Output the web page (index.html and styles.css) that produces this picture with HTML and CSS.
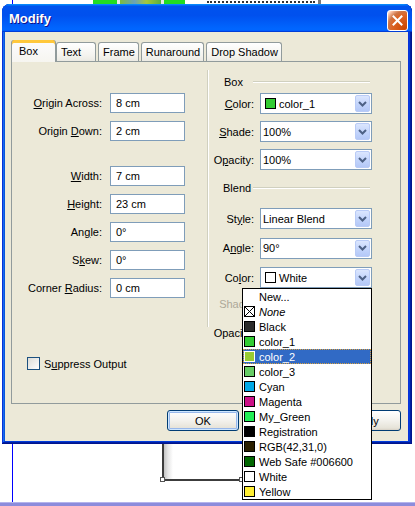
FILE: index.html
```html
<!DOCTYPE html>
<html>
<head>
<meta charset="utf-8">
<title>Modify</title>
<link rel="stylesheet" href="styles.css">
</head>
<body>
<div class="desk">
  <div class="desk-guide"></div>
  <div class="desk-pic"><span class="pic-a"></span><span class="pic-b"></span><span class="pic-c"></span><span class="pic-b"></span><span class="pic-a pic-short"></span></div>
  <div class="desk-dots"></div>
  <div class="desk-rule"></div>
  <div class="desk-box"><span class="handle handle-l"></span><span class="handle handle-r"></span></div>
  <div class="desk-strip"></div>
</div>

<div class="window">
  <div class="titlebar">
    <span class="title">Modify</span>
    <span class="close"><svg width="13" height="13" viewBox="0 0 13 13"><path d="M2.5 2.5 L10.5 10.5 M10.5 2.5 L2.5 10.5" stroke="#fff" stroke-width="2" stroke-linecap="square"/></svg></span>
  </div>
  <div class="client">
    <div class="tabs">
      <div class="tab active">Box</div>
      <div class="tab tab-first">Text</div>
      <div class="tab">Frame</div>
      <div class="tab tab-wide">Runaround</div>
      <div class="tab tab-wide">Drop Shadow</div>
    </div>
    <div class="panel">
      <div class="left">
        <div class="fields">
          <span class="lbl"><u>O</u>rigin Across:</span><span class="field">8 cm</span>
          <span class="lbl">Origin <u>D</u>own:</span><span class="field">2 cm</span>
        </div>
        <div class="fields fields-size">
          <span class="lbl"><u>W</u>idth:</span><span class="field">7 cm</span>
          <span class="lbl"><u>H</u>eight:</span><span class="field">23 cm</span>
          <span class="lbl">An<u>g</u>le:</span><span class="field">0°</span>
          <span class="lbl">S<u>k</u>ew:</span><span class="field">0°</span>
          <span class="lbl">Corner <u>R</u>adius:</span><span class="field">0 cm</span>
        </div>
        <div class="check"><span class="checkbox"></span><span>S<u>u</u>ppress Output</span></div>
      </div>
      <div class="right">
        <div class="group-head"><span class="head-text">Box</span><span class="rule"></span></div>
        <div class="rows">
          <span class="lbl"><u>C</u>olor:</span>
          <span class="combo"><span class="val"><span class="sw sw-c1"></span>color_1</span><span class="drop"><svg width="9" height="6" viewBox="0 0 9 6"><path d="M1 1 L4.5 4.5 L8 1" fill="none" stroke="#4d6185" stroke-width="2"/></svg></span></span>
          <span class="lbl"><u>S</u>hade:</span>
          <span class="combo"><span class="val">100%</span><span class="drop"><svg width="9" height="6" viewBox="0 0 9 6"><path d="M1 1 L4.5 4.5 L8 1" fill="none" stroke="#4d6185" stroke-width="2"/></svg></span></span>
          <span class="lbl">O<u>p</u>acity:</span>
          <span class="combo"><span class="val">100%</span><span class="drop"><svg width="9" height="6" viewBox="0 0 9 6"><path d="M1 1 L4.5 4.5 L8 1" fill="none" stroke="#4d6185" stroke-width="2"/></svg></span></span>
        </div>
        <div class="group-head group-blend"><span class="head-text head-blend">Blend</span><span class="rule"></span></div>
        <div class="rows rows-blend">
          <span class="lbl">St<u>y</u>le:</span>
          <span class="combo"><span class="val">Linear Blend</span><span class="drop"><svg width="9" height="6" viewBox="0 0 9 6"><path d="M1 1 L4.5 4.5 L8 1" fill="none" stroke="#4d6185" stroke-width="2"/></svg></span></span>
          <span class="lbl">A<u>n</u>gle:</span>
          <span class="combo"><span class="val">90°</span><span class="drop"><svg width="9" height="6" viewBox="0 0 9 6"><path d="M1 1 L4.5 4.5 L8 1" fill="none" stroke="#4d6185" stroke-width="2"/></svg></span></span>
          <span class="lbl">Co<u>l</u>or:</span>
          <span class="combo"><span class="val"><span class="sw sw-white"></span>White</span><span class="drop"><svg width="9" height="6" viewBox="0 0 9 6"><path d="M1 1 L4.5 4.5 L8 1" fill="none" stroke="#4d6185" stroke-width="2"/></svg></span></span>
        </div>
        <div class="rows rows-under">
          <span class="lbl lbl-disabled">Shade:</span>
          <span class="combo"></span>
          <span class="lbl">Opacity:</span>
          <span class="combo"></span>
        </div>
      </div>
    </div>
    <div class="buttons">
      <button class="btn btn-default">OK</button>
      <button class="btn">Cancel</button>
      <button class="btn">Apply</button>
    </div>
  </div>
</div>

<ul class="popup">
  <li class="item-new">New...</li>
  <li><svg class="sw-svg" width="11" height="11" viewBox="0 0 11 11"><rect x="0.5" y="0.5" width="10" height="10" fill="#fff" stroke="#000"/><path d="M1 1 L10 10 M10 1 L1 10" stroke="#000" stroke-width="1"/></svg><i>None</i></li>
  <li><span class="sw sw-black"></span>Black</li>
  <li><span class="sw sw-c1"></span>color_1</li>
  <li class="item-sel"><span class="sw sw-c2"></span>color_2</li>
  <li><span class="sw sw-c3"></span>color_3</li>
  <li><span class="sw sw-cyan"></span>Cyan</li>
  <li><span class="sw sw-magenta"></span>Magenta</li>
  <li><span class="sw sw-mygreen"></span>My_Green</li>
  <li><span class="sw sw-reg"></span>Registration</li>
  <li><span class="sw sw-rgb"></span>RGB(42,31,0)</li>
  <li><span class="sw sw-web"></span>Web Safe #006600</li>
  <li><span class="sw sw-white"></span>White</li>
  <li><span class="sw sw-yellow"></span>Yellow</li>
</ul>
</body>
</html>
```
FILE: styles.css
```css
* { box-sizing: border-box; }
html, body { margin: 0; padding: 0; }
body {
  width: 415px;
  height: 506px;
  overflow: hidden;
  position: relative;
  background: #fff;
  font-family: "Liberation Sans", Arial, sans-serif;
  font-size: 11px;
  color: #000;
}

/* document canvas behind the dialog */
.desk-guide { position: absolute; left: 12px; top: 0; width: 1px; height: 506px; background: #0000ff; }
.desk-pic { position: absolute; left: 93px; top: 0; height: 4px; width: 92px; display: flex; }
.pic-a { width: 24px; background: #22dd22; }
.pic-short { width: 21px; }
.pic-b { width: 3px; background: #e6ebe6; }
.pic-c { width: 41px; background: linear-gradient(90deg, #7cbc3c, #6aa2b8 35%, #a4c83c 65%, #58b040); }
.desk-dots { position: absolute; left: 207px; top: 1px; width: 108px; border-top: 2px dotted #333; }
.desk-rule { position: absolute; left: 318px; top: 0; width: 3px; height: 5px; background: #7a7a7a; }
.desk-box {
  position: absolute; left: 162px; top: 440px; width: 82px; height: 41px;
  border-left: 2px solid #3c3c3c; border-bottom: 2px solid #3c3c3c;
  background: linear-gradient(90deg, #c4c4c4, #e6e6e6 4px, #fff 9px);
}
.handle { position: absolute; top: 37px; width: 5px; height: 5px; border: 1px solid #555; background: #fff; }
.handle-l { left: -4px; }
.handle-r { left: 75px; }
.desk-strip { position: absolute; left: 0; top: 502px; width: 415px; height: 4px; background: #8c8cdc; border-top: 1px solid #b4b4ec; }

/* window */
.window {
  position: relative;
  z-index: 1;
  margin: 4px 0 0 2px;
  width: 410px;
  height: 440px;
  padding: 0 4px 3px 3px;
  background: #0831d9;
  border-radius: 8px 8px 0 0;
  box-shadow: inset -1px -1px #00138c, inset 1px 1px #0831d9, inset -2px -2px #001ea0, inset 2px 2px #166aee, inset -3px -3px #003bda, inset 3px 3px #0855dd;
  display: flex;
  flex-direction: column;
}
.titlebar {
  height: 28px;
  margin: 0 -4px 0 -3px;
  padding: 0 4px 0 7px;
  display: flex;
  align-items: flex-start;
  justify-content: space-between;
  border-radius: 8px 8px 0 0;
  background: linear-gradient(180deg, #0997ff, #0053ee 8%, #0050ee 40%, #0066ff 88%, #0066ff 93%, #005bff 95%, #003dd7 96%, #003dd7);
}
.title {
  margin-top: 7px;
  line-height: 15px;
  font-size: 13px;
  font-weight: bold;
  color: #fff;
  text-shadow: 1px 1px #0f1089;
}
.close {
  margin-top: 6px;
  width: 21px;
  height: 21px;
  border: 1px solid #fff;
  border-radius: 3px;
  background: radial-gradient(circle at 90% 90%, #cc4600 0, #dc6527 55%, #cd7546 70%, #ffccb2 90%, #fff 100%);
  display: flex;
  align-items: center;
  justify-content: center;
}

.client {
  flex: 1;
  background: #ece9d8;
  padding: 8px 7px 0 6px;
  display: flex;
  flex-direction: column;
}

/* tabs */
.tabs { display: flex; align-items: flex-end; height: 21px; position: relative; z-index: 1; }
.tab {
  height: 19px;
  min-width: 40px;
  padding: 0 3px 0 4px;
  margin-left: 2px;
  border: 1px solid #919b9c;
  border-bottom: none;
  border-radius: 3px 3px 0 0;
  background: linear-gradient(#fff, #f4f3ee 70%, #ebeae3);
  line-height: 18px;
  white-space: nowrap;
}
.tab-first { margin-left: 0; }
.tab.active {
  height: 22px;
  width: 45px;
  margin-left: 0;
  margin-bottom: -1px;
  padding: 1px 0 0 7px;
  border-top: none;
  background: linear-gradient(#fcfcfe, #f6f5f0);
  box-shadow: inset 0 3px #ffc83c, inset 0 1px #e68b2c;
  line-height: 20px;
}

.panel {
  height: 343px;
  border: 1px solid #919b9c;
  background: #ece9d8;
  display: flex;
}

/* left column */
.left { width: 173px; flex: none; padding-top: 31px; }
.fields {
  display: grid;
  grid-template-columns: 90px 75px;
  column-gap: 8px;
  row-gap: 8px;
  align-items: center;
}
.fields-size { margin-top: 25px; }
.lbl { text-align: right; white-space: nowrap; }
.lbl-disabled { color: #aca899; }
.field {
  height: 20px;
  border: 1px solid #7f9db9;
  background: #fff;
  padding-left: 5px;
  display: flex;
  align-items: center;
}
.check { margin: 59px 0 0 15px; display: flex; align-items: center; gap: 4px; }
.checkbox {
  width: 13px;
  height: 13px;
  border: 1px solid #1c5180;
  background: linear-gradient(135deg, #dcdcd7, #fff);
}

/* right column */
.right { margin-left: 22px; padding: 13px 0 0 2px; position: relative; width: 168px; }
.right::before {
  content: "";
  position: absolute;
  left: 0;
  top: 8px;
  width: 1px;
  height: 257px;
  background: #d0d0bf;
  box-shadow: 1px 0 #fff;
}
.group-head { display: flex; align-items: center; height: 14px; }
.group-blend { margin-top: 11px; }
.head-text { width: 44px; padding-left: 15px; white-space: nowrap; }
.head-blend { padding-left: 14px; }
.rule { width: 117px; height: 2px; border-top: 1px solid #d0d0bf; border-bottom: 1px solid #fff; }
.rows {
  display: grid;
  grid-template-columns: 45px 112px;
  column-gap: 6px;
  row-gap: 7px;
  align-items: center;
  margin-top: 4px;
}
.rows-blend { margin-top: 13px; row-gap: 8.5px; }
.rows-under { margin-top: 5px; row-gap: 8px; }
.combo {
  height: 21px;
  border: 1px solid #7f9db9;
  background: #fff;
  display: flex;
  align-items: center;
  padding: 0 1px 0 2px;
}
.val { flex: 1; display: flex; align-items: center; gap: 3px; white-space: nowrap; }
.drop {
  width: 15px;
  height: 17px;
  border: 1px solid #b9cbf6;
  border-radius: 2px;
  background: linear-gradient(#dbe6fe, #c1d3fb 60%, #b4c8f7);
  display: flex;
  align-items: center;
  justify-content: center;
}

/* swatches */
.sw { width: 11px; height: 11px; border: 1px solid #000; flex: none; }
.val .sw { margin-left: 2px; }
.sw-svg { flex: none; display: block; }
.sw-black { background: #2b2b2b; }
.sw-c1 { background: #33cc33; }
.sw-c2 { background: #99cc33; }
.sw-c3 { background: #66cc66; }
.sw-cyan { background: #00a8e6; }
.sw-magenta { background: #cc1188; }
.sw-mygreen { background: #22ee55; }
.sw-reg { background: #000; }
.sw-rgb { background: #2a1f00; }
.sw-web { background: #006600; }
.sw-white { background: #fff; }
.sw-yellow { background: #ffee33; }

/* buttons */
.buttons { display: flex; justify-content: flex-end; gap: 9px; margin-top: 6px; }
.btn {
  width: 72px;
  height: 21px;
  padding: 0;
  border: 1px solid #003c74;
  border-radius: 3px;
  background: linear-gradient(#fff, #f3f2ed 50%, #e6e3d8 90%, #d6d0c5);
  font-family: "Liberation Sans", Arial, sans-serif;
  font-size: 11px;
  color: #000;
}
.btn-default { box-shadow: inset 0 0 0 1px #cee7ff, inset 0 0 0 2px #98b8ea; }

/* open colour list */
.popup {
  position: absolute;
  left: 242px;
  top: 288px;
  width: 130px;
  margin: 0;
  padding: 0;
  list-style: none;
  border: 1px solid #000;
  background: #fff;
  z-index: 2;
}
.popup li {
  height: 15px;
  display: flex;
  align-items: center;
  gap: 4px;
  padding-left: 1px;
  white-space: nowrap;
}
.popup .item-new { padding-left: 16px; }
.popup .item-sel {
  background: #316ac5;
  color: #fff;
  outline: 1px dotted #d8a040;
  outline-offset: -1px;
}
.item-sel .sw { border-color: #fff; }
```
